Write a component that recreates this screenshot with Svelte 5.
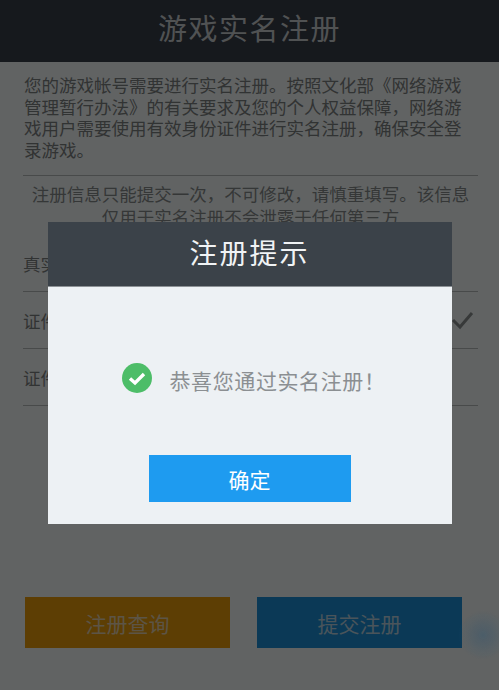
<script>
  const rows = [
    { label: '真实姓名', ok: false },
    { label: '证件类型', ok: true },
    { label: '证件号码', ok: false }
  ]
</script>

<div class="page">
  <header class="top__bar">游戏实名注册</header>

  <p class="intro">您的游戏帐号需要进行实名注册。按照文化部《网络游戏管理暂行办法》的有关要求及您的个人权益保障&#xFF0C;网络游戏用户需要使用有效身份证件进行实名注册&#xFF0C;确保安全登录游戏。</p>

  <div class="form">
    <p class="notice">注册信息只能提交一次&#xFF0C;不可修改&#xFF0C;请慎重填写。该信息<br />仅用于实名注册不会泄露于任何第三方</p>
    {#each rows as row}
      <div class="form__row">
        <span>{row.label}</span>
        {#if row.ok}
          <svg class="tick" width="24" height="20" viewBox="0 0 24 20" aria-hidden="true">
            <path d="M3 10 L10 17 L22 3" fill="none" stroke="currentColor" stroke-width="3" />
          </svg>
        {/if}
      </div>
    {/each}
  </div>

  <div class="actions">
    <button class="action__btn query__btn">注册查询</button>
    <button class="action__btn submit__btn">提交注册</button>
  </div>
</div>

<div class="overlay">
  <section class="dialog">
    <h2 class="dialog__title">注册提示</h2>
    <div class="dialog__body">
      <div class="message">
        <svg width="30" height="30" viewBox="0 0 30 30" aria-hidden="true">
          <circle cx="15" cy="15" r="15" fill="#4dbd68" />
          <path d="M8 15.5 L13 20 L22 11" fill="none" stroke="#fff" stroke-width="3.4" />
        </svg>
        <span>恭喜您通过实名注册&#xFF01;</span>
      </div>
      <button class="confirm__btn">确定</button>
    </div>
  </section>
</div>
<div class="smudge"></div>

<style>
  :global(body) {
    margin: 0;
    background: #f2f8f8;
    font-family: "Liberation Sans", "Noto Sans CJK SC", sans-serif;
  }

  .page {
    display: flex;
    flex-direction: column;
    width: 499px;
    height: 690px;
    box-sizing: border-box;
    overflow: hidden;
    color: #7c8080;
  }

  .top__bar {
    height: 62px;
    line-height: 60px;
    flex: none;
    text-align: center;
    font-size: 29px;
    letter-spacing: 1.5px;
    color: #c8cdd0;
    background: #383f49;
  }

  .intro {
    margin: 14px 24px 0;
    width: 440px;
    font-size: 17.5px;
    line-height: 21.6px;
  }

  .form {
    margin: 13px 21px 0 23px;
    border-top: 1px solid #b4b9b9;
  }

  .notice {
    margin: 8px -2px 0;
    text-align: center;
    font-size: 17.5px;
    line-height: 23px;
    height: 51px;
    color: #868a8a;
  }

  .form__row {
    display: flex;
    align-items: center;
    justify-content: space-between;
    height: 56px;
    border-bottom: 1px solid #b4b9b9;
    font-size: 17.5px;
  }

  .tick {
    margin-right: 4px;
    color: #8a8f8f;
  }

  .actions {
    display: flex;
    gap: 27px;
    margin: auto 37px 42px 25px;
  }

  .action__btn {
    flex: 1;
    height: 51px;
    border: none;
    padding: 0;
    font: inherit;
    font-size: 21px;
  }

  .query__btn {
    background: #e89c0c;
    color: #e6d2ae;
  }

  .submit__btn {
    background: #1c90d8;
    color: #b8d2e2;
  }

  .overlay {
    position: fixed;
    inset: 0;
    display: flex;
    justify-content: center;
    align-items: flex-start;
    padding-top: 222px;
    box-sizing: border-box;
    background: rgba(0, 0, 0, 0.6);
  }

  .dialog {
    width: 404px;
  }

  .dialog__title {
    margin: 0;
    height: 65px;
    line-height: 65px;
    text-align: center;
    font-size: 28px;
    font-weight: 400;
    letter-spacing: 2px;
    color: #f0f3f5;
    background: #3b4249;
    border-bottom: 1px solid #8d9296;
    box-sizing: border-box;
  }

  .dialog__body {
    display: flex;
    flex-direction: column;
    align-items: center;
    height: 237px;
    background: #edf1f4;
  }

  .message {
    display: flex;
    align-items: center;
    align-self: flex-start;
    gap: 18px;
    height: 30px;
    margin: 76px 0 0 74px;
    font-size: 21px;
    letter-spacing: 0.6px;
    color: #8b8f92;
  }

  .message span {
    margin-top: 4px;
  }

  .confirm__btn {
    width: 202px;
    height: 47px;
    margin-top: 62px;
    border: none;
    padding: 0;
    font: inherit;
    font-size: 21px;
    color: #fff;
    background: #1e9bf0;
  }

  .smudge {
    position: fixed;
    left: 458px;
    top: 610px;
    width: 50px;
    height: 50px;
    border-radius: 50%;
    background: radial-gradient(circle, rgba(50, 85, 110, 0.45), rgba(90, 100, 105, 0) 70%);
  }
</style>
